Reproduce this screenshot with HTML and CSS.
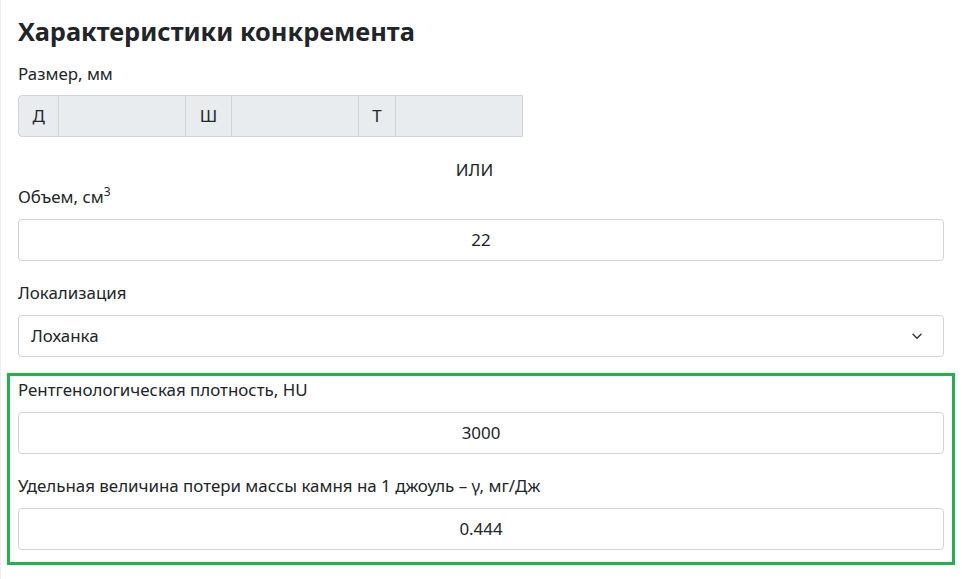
FILE: index.html
```html
<!DOCTYPE html>
<html lang="ru">
<head>
<meta charset="utf-8">
<link rel="stylesheet" href="styles.css">
</head>
<body>
<div class="page">
  <h2 class="title">Характеристики конкремента</h2>
  <div class="label label-first">Размер, мм</div>
  <div class="size-group">
    <span class="addon">Д</span><span class="cell"></span>
    <span class="addon">Ш</span><span class="cell"></span>
    <span class="addon">Т</span><span class="cell"></span>
  </div>
  <div class="or">ИЛИ</div>
  <div class="label label-tight">Объем, см<sup>3</sup></div>
  <div class="field center">22</div>
  <div class="label">Локализация</div>
  <div class="field select">
    <span>Лоханка</span>
    <svg class="chev" width="10" height="7" viewBox="0 0 10 7"><polyline points="1,1.2 5,5.2 9,1.2" fill="none" stroke="#343a40" stroke-width="1.5" stroke-linecap="round" stroke-linejoin="round"/></svg>
  </div>
  <div class="highlight">
    <div class="label label-in">Рентгенологическая плотность, HU</div>
    <div class="field center">3000</div>
    <div class="label">Удельная величина потери массы камня на 1 джоуль – γ, мг/Дж</div>
    <div class="field center">0.444</div>
  </div>
</div>
</body>
</html>
```
FILE: styles.css
```css
html, body {
  margin: 0;
  padding: 0;
  background: #fff;
}
body {
  font-family: "Noto Sans", "Open Sans", sans-serif;
  font-size: 17px;
  line-height: 24px;
  color: #212529;
  border-left: 1px solid #efefef;
  min-height: 579px;
  box-sizing: border-box;
}
.page {
  padding: 0 17px 0 17px;
  width: 926px;
}
.title {
  margin: 17px 0 0 0;
  font-size: 25.4px;
  line-height: 29px;
  font-weight: 700;
}
.label {
  margin-top: 20px;
  margin-bottom: 10px;
  font-size: 16.9px;
}
.label-first {
  margin-top: 16px;
  margin-bottom: 9px;
}
.label-tight {
  margin-top: 3px;
}
.label-in {
  margin-top: 2px;
}
.label sup {
  font-size: 12px;
  line-height: 0;
  vertical-align: 7px;
}
.size-group {
  display: flex;
  width: 505px;
  height: 42px;
  box-sizing: border-box;
  border: 1px solid #ced4da;
  border-radius: 4px 0 0 4px;
  background: #e9ecef;
}
.addon {
  display: flex;
  align-items: center;
  justify-content: center;
  padding: 0 13.5px;
  font-size: 16.9px;
  border-right: 1px solid #ced4da;
}
.cell {
  flex: 1;
  border-right: 1px solid #ced4da;
}
.cell:last-child {
  border-right: none;
}
.or {
  margin-top: 21px;
  padding-right: 13px;
  text-align: center;
  font-size: 16.9px;
}
.field {
  height: 42px;
  box-sizing: border-box;
  border: 1px solid #ced4da;
  border-radius: 4px;
  display: flex;
  align-items: center;
  font-size: 16.9px;
  background: #fff;
}
.center {
  justify-content: center;
}
.select {
  justify-content: space-between;
  padding: 0 21px 0 12px;
}
.chev {
  display: block;
}
.highlight {
  margin: 16px -11px 0 -11px;
  border: 3px solid #22b14c;
  padding: 0 8px 12px 8px;
}
```
